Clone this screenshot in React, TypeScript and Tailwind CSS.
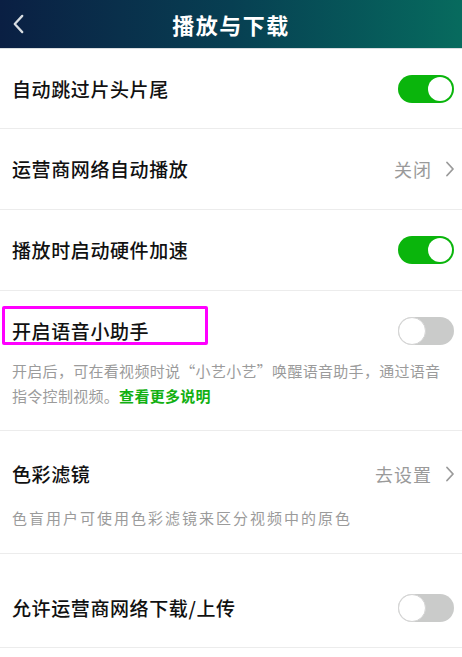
import React from 'react'

const font = { fontFamily: '"Noto Sans CJK SC", "Noto Sans", sans-serif' }

function Toggle({ on }: { on: boolean }) {
  return (
    <div
      className={
        on
          ? 'flex h-[28px] w-[56px] shrink-0 items-center justify-end rounded-full bg-[#0ab50c] p-[2px]'
          : 'flex h-[28px] w-[56px] shrink-0 items-center justify-start rounded-full bg-[#cacbca] p-0'
      }
    >
      <div
        className={
          on
            ? 'h-[24px] w-[24px] rounded-full bg-white'
            : 'h-[28px] w-[28px] rounded-full border border-[#d4d4d4] bg-white'
        }
      />
    </div>
  )
}

function Chevron({ className = '' }: { className?: string }) {
  return (
    <svg viewBox="0 0 10 16" className={className} fill="none">
      <path d="M2 1.5 L8 8 L2 14.5" stroke="currentColor" strokeWidth="1.8" strokeLinecap="round" strokeLinejoin="round" />
    </svg>
  )
}

function Value({ text }: { text: string }) {
  return (
    <div className="flex items-center text-[#9a9a9a]">
      <span className="text-[18px] leading-[26px] tracking-[1px]">{text}</span>
      <Chevron className="ml-[13px] h-[16px] w-[10px]" />
    </div>
  )
}

const title = 'text-[19px] leading-[26px] tracking-[0.6px] font-medium text-[#111]'
const desc = 'text-[15px] leading-[25px] text-[#9b9b9b]'

export default function App() {
  return (
    <div className="min-h-[657px] w-full bg-white" style={font}>
      <header className="grid h-[49px] grid-cols-[48px_1fr_48px] items-center border-b border-[#d9dde0] bg-gradient-to-r from-[#0a1f43] via-[#073f52] to-[#076b5e]">
        <Chevron className="ml-[12px] h-[20px] w-[13px] rotate-180 text-[#d8dde2]" />
        <h1 className="text-center text-[22px] font-bold tracking-[1.5px] text-white">播放与下载</h1>
        <div />
      </header>

      <div className="flex h-[80px] items-center justify-between border-b border-[#ececec] pl-[12px] pr-[8px]">
        <span className={title}>自动跳过片头片尾</span>
        <Toggle on />
      </div>

      <div className="flex h-[81px] items-center justify-between border-b border-[#ececec] pl-[12px] pr-[7px]">
        <span className={title}>运营商网络自动播放</span>
        <Value text="关闭" />
      </div>

      <div className="flex h-[81px] items-center justify-between border-b border-[#ececec] pl-[12px] pr-[8px]">
        <span className={title}>播放时启动硬件加速</span>
        <Toggle on />
      </div>

      <div className="border-b border-[#ececec] pb-[22px] pl-[12px] pr-[8px] pt-[26px]">
        <div className="flex items-center justify-between">
          <div className="relative">
            <span className={title}>开启语音小助手</span>
            <div className="absolute left-[-10px] top-[-12px] h-[39px] w-[206px] rounded-[2px] border-[3px] border-[#ff00ff]" />
          </div>
          <Toggle on={false} />
        </div>
        <p className={`mt-[13px] ${desc} tracking-[0.3px]`}>
          开启后，可在看视频时说“小艺小艺”唤醒语音助手，通过语音
          <br />
          指令控制视频。<span className="font-bold text-[#12b012]">查看更多说明</span>
        </p>
      </div>

      <div className="border-b border-[#ececec] pb-[23px] pl-[12px] pr-[7px] pt-[30px]">
        <div className="flex items-center justify-between">
          <span className={title}>色彩滤镜</span>
          <Value text="去设置" />
        </div>
        <p className={`mt-[18px] ${desc} tracking-[2px]`}>色盲用户可使用色彩滤镜来区分视频中的原色</p>
      </div>

      <div className="flex h-[94px] items-center justify-between border-b border-[#ececec] pl-[12px] pr-[8px] pt-[14px]">
        <span className={title}>允许运营商网络下载/上传</span>
        <Toggle on={false} />
      </div>
    </div>
  )
}
